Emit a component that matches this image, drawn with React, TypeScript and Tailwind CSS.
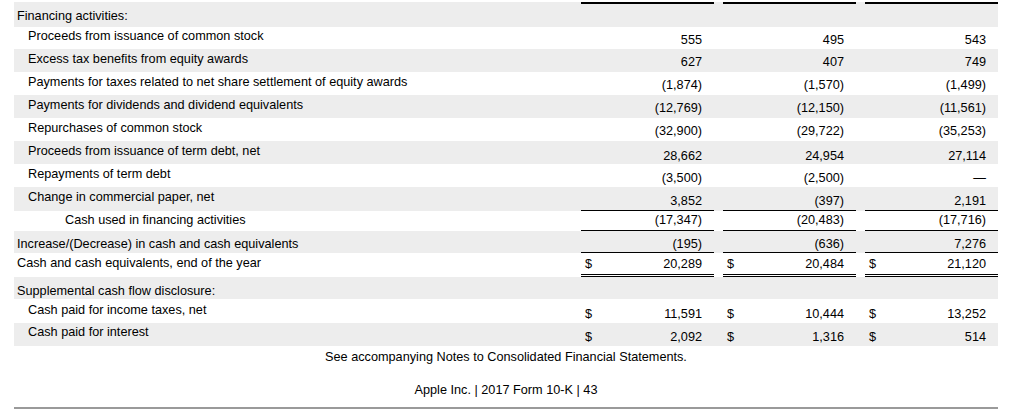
import React from "react";

type Row = {
  label: string;
  indent: string;
  h: string;
  lt: string;
  nt: string;
  gray: boolean;
  values?: string[];
  dollar?: boolean;
  rule?: string;
};

// Rule classes under the number cells: single line, double line, or none.
const SINGLE = "border-b border-black";
const DOUBLE = "border-b-[3px] border-double border-black";

const ROWS: Row[] = [
  { label: "Financing activities:", indent: "pl-[3px]", h: "h-[25px]", lt: "pt-[7px]", nt: "pt-[7px]", gray: true, rule: "top" },
  { label: "Proceeds from issuance of common stock", indent: "pl-[14px]", h: "h-[22px]", lt: "pt-[2px]", nt: "pt-[6px]", gray: false, values: ["555", "495", "543"] },
  { label: "Excess tax benefits from equity awards", indent: "pl-[14px]", h: "h-[23px]", lt: "pt-[3px]", nt: "pt-[6px]", gray: true, values: ["627", "407", "749"] },
  { label: "Payments for taxes related to net share settlement of equity awards", indent: "pl-[14px]", h: "h-[23px]", lt: "pt-[3px]", nt: "pt-[6px]", gray: false, values: ["(1,874)", "(1,570)", "(1,499)"] },
  { label: "Payments for dividends and dividend equivalents", indent: "pl-[14px]", h: "h-[23px]", lt: "pt-[3px]", nt: "pt-[6px]", gray: true, values: ["(12,769)", "(12,150)", "(11,561)"] },
  { label: "Repurchases of common stock", indent: "pl-[14px]", h: "h-[23px]", lt: "pt-[3px]", nt: "pt-[6px]", gray: false, values: ["(32,900)", "(29,722)", "(35,253)"] },
  { label: "Proceeds from issuance of term debt, net", indent: "pl-[14px]", h: "h-[23px]", lt: "pt-[3px]", nt: "pt-[8px]", gray: true, values: ["28,662", "24,954", "27,114"] },
  { label: "Repayments of term debt", indent: "pl-[14px]", h: "h-[23px]", lt: "pt-[3px]", nt: "pt-[7px]", gray: false, values: ["(3,500)", "(2,500)", "—"] },
  { label: "Change in commercial paper, net", indent: "pl-[14px]", h: "h-[24px]", lt: "pt-[3px]", nt: "pt-[7px]", gray: true, values: ["3,852", "(397)", "2,191"], rule: SINGLE },
  { label: "Cash used in financing activities", indent: "pl-[51px]", h: "h-[20px]", lt: "pt-[2px]", nt: "pt-[2px]", gray: false, values: ["(17,347)", "(20,483)", "(17,716)"], rule: SINGLE },
  { label: "Increase/(Decrease) in cash and cash equivalents", indent: "pl-[3px]", h: "h-[22px]", lt: "pt-[6px]", nt: "pt-[6px]", gray: true, values: ["(195)", "(636)", "7,276"], rule: SINGLE },
  { label: "Cash and cash equivalents, end of the year", indent: "pl-[3px]", h: "h-[24px]", lt: "pt-[3px]", nt: "pt-[4px]", gray: false, values: ["20,289", "20,484", "21,120"], dollar: true, rule: DOUBLE },
  { label: "Supplemental cash flow disclosure:", indent: "pl-[3px]", h: "h-[22px]", lt: "pt-[7px]", nt: "pt-[7px]", gray: true },
  { label: "Cash paid for income taxes, net", indent: "pl-[14px]", h: "h-[24px]", lt: "pt-[4px]", nt: "pt-[8px]", gray: false, values: ["11,591", "10,444", "13,252"], dollar: true },
  { label: "Cash paid for interest", indent: "pl-[14px]", h: "h-[23px]", lt: "pt-[2px]", nt: "pt-[7px]", gray: true, values: ["2,092", "1,316", "514"], dollar: true },
];

function NumCell({ row, value }: { row: Row; value?: string }) {
  const rule = row.rule === "top" ? "border-t-2 border-black" : row.rule ?? "";
  return (
    <div className={`flex justify-between pl-[4px] pr-[12px] ${row.nt} ${rule}`}>
      <span>{value && row.dollar ? "$" : ""}</span>
      <span>{value ?? ""}</span>
    </div>
  );
}

export default function App() {
  return (
    <div
      className="h-[409px] w-[1014px] bg-white pt-[2px] text-[12.7px] leading-[14px] text-black"
      style={{ fontFamily: '"Liberation Sans", Arial, sans-serif' }}
    >
      <div className="mx-[14px] w-[984px]">
        {ROWS.map((row) => (
          <div
            key={row.label}
            className={`grid grid-cols-[567px_133px_9px_133px_9px_133px] ${row.h} ${
              row.gray ? "bg-[#ededed]" : "bg-white"
            }`}
          >
            <div className={`${row.indent} ${row.lt} whitespace-nowrap`}>{row.label}</div>
            <NumCell row={row} value={row.values?.[0]} />
            <div />
            <NumCell row={row} value={row.values?.[1]} />
            <div />
            <NumCell row={row} value={row.values?.[2]} />
          </div>
        ))}

        <p className="pt-[4px] text-center">See accompanying Notes to Consolidated Financial Statements.</p>
        <p className="pt-[19px] text-center">Apple Inc. | 2017 Form 10-K | 43</p>
        <div className="mt-[10px] h-[2px] bg-[#9a9a9a]" />
      </div>
    </div>
  );
}
